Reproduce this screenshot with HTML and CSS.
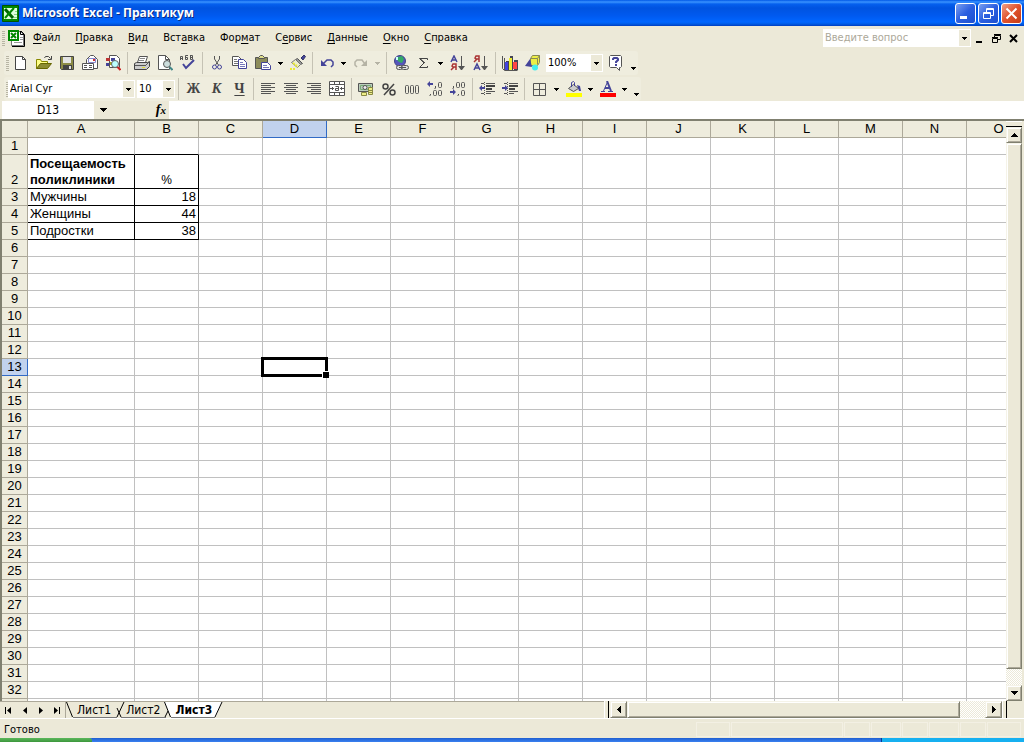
FILE: index.html
```html
<!DOCTYPE html>
<html lang="ru">
<head>
<meta charset="utf-8">
<title>Microsoft Excel - Практикум</title>
<link rel="stylesheet" href="styles.css">
</head>
<body>
<header class="titlebar">
  <svg class="app-icon" width="17" height="17" viewBox="0 0 17 17"><path fill="#080" stroke="#050" d="M.5.5h16v16H.5z"/><path fill="#dfd" d="M2 3h13v11H2z"/><path stroke="#060" stroke-width="3" d="M3 4l8 9"/><path stroke="#080" stroke-width="2" d="M12 3l-9 10"/><path stroke="#8c8" d="M12 12.500h3M12 9.500h3M13 6.500h2"/></svg>
  <h1 class="title">Microsoft Excel - Практикум</h1>
  <div class="window-buttons">
    <button class="win" aria-label="Свернуть"><svg width="19" height="19"><path fill="#fff" d="M4 12h7v3H4z"/></svg></button>
    <button class="win" aria-label="Восстановить"><svg width="19" height="19" fill="none" stroke="#fff"><path d="M4.500 8.500h7v6h-7zM4 9.500h8M7.500 8V4.500h7v7H12M7 5.500h8"/></svg></button>
    <button class="win win-close" aria-label="Закрыть"><svg width="19" height="19"><path stroke="#fff" stroke-width="2" d="M4.500 4.500l10 10M14.500 4.500l-10 10"/></svg></button>
  </div>
</header>

<nav class="menubar">
  <span class="grip"></span>
  <svg class="book-icon" width="18" height="17" viewBox="0 0 18 17"><path fill="#fff" stroke="#777" d="M3.500 1.500h9l3 3v11h-12z"/><path stroke="#000" fill="none" d="M12.500 1v3.500h4v12H4M13 1l3 3"/><path fill="#fff" stroke="#080" stroke-width="2" d="M1 1h9v9H1z"/><path stroke="#080" stroke-width="2" d="M3 3l5 5M8 3L3 8"/><path stroke="#999" d="M6 12.500h8M12 7.500h3M12 9.500h3"/></svg>
  <div class="menus">
    <button><u>Ф</u>айл</button><button><u>П</u>равка</button><button><u>В</u>ид</button><button>Вст<u>а</u>вка</button><button>Фор<u>м</u>ат</button><button>С<u>е</u>рвис</button><button><u>Д</u>анные</button><button><u>О</u>кно</button><button><u>С</u>правка</button>
  </div>
  <div class="combo ask"><input aria-label="Введите вопрос" placeholder="Введите вопрос"><button class="drop" aria-label="Список вопросов"><svg class="tri" width="5" height="3"><path d="M0 0h5L2.500 3z"/></svg></button></div>
  <div class="doc-buttons">
    <button aria-label="Свернуть книгу"><svg width="9" height="9"><path d="M1 7h6v2H1z"/></svg></button>
    <button aria-label="Восстановить книгу"><svg width="9" height="9" fill="none" stroke="#000"><path d="M.5 4.500h5v4h-5zM0 3.500h6M2.500 3V1.500h6v4H6M2 .5h7"/></svg></button>
    <button aria-label="Закрыть книгу"><svg width="9" height="9"><path stroke="#000" stroke-width="2" d="M1 1l7 7M8 1L1 8"/></svg></button>
  </div>
</nav>

<section class="toolbars">
  <div class="toolbar">
    <span class="grip"></span>
    <button aria-label="Создать"><svg viewBox="0 0 16 16"><path fill="#fff" stroke="#444" d="M2.500 1.500h7l3 3v10h-10z"/><path fill="none" stroke="#444" d="M9.500 1.500v3h3"/></svg></button>
    <button aria-label="Открыть"><svg viewBox="0 0 16 16"><path fill="#ff8" stroke="#880" d="M.5 13.500v-9h4l1 2h6v3"/><path fill="#8c8c32" stroke="#660" d="M.5 13.500l4-5h11l-4 5z"/><path fill="none" stroke="#444" d="M8.500 3l1-1.500h3l2 2M15.500 1v3.500H12"/></svg></button>
    <button aria-label="Сохранить"><svg viewBox="0 0 16 16"><path fill="#8c8c46" stroke="#444" d="M1.500 1.500h13v13h-12l-1-1z"/><path fill="#e4e4e4" d="M4 2h8v6H4z"/><path fill="#444" d="M4 10h9v4H4z"/><path fill="#e4e4e4" d="M10 11h2v3h-2z"/></svg></button>
    <button aria-label="Сообщение"><svg viewBox="0 0 16 16"><path fill="#fff" stroke="#555" d="M4.500 9V4.500l4-4h3l4 4v9h-4"/><path fill="#fff" stroke="#88c" d="M6.500 3.500h7v4h-7z"/><path stroke="#c33" stroke-width="2" d="M11 5h2"/><path fill="#fff" stroke="#555" d="M.5 8.500h11v6H.5z"/><path stroke="#555" d="M2 10.500h3M7 10.500h3M2 12.500h3M7 12.500h3"/></svg></button>
    <button aria-label="Поиск"><svg viewBox="0 0 16 16"><path fill="#fff" stroke="#555" d="M4.500.5h7l3 3v9h-10z"/><path fill="#b33" d="M1 3h4v3H1z"/><path fill="#449" d="M6 3h4v3H6zM1 8h3v3H1z"/><path fill="#aa2" d="M5 7h3v3H5z"/><circle cx="10" cy="9" r="3.500" fill="#bff" stroke="#666"/><path stroke="#c22" stroke-width="2" d="M12.500 12l3 3"/></svg></button>
    <i class="sep"></i>
    <button aria-label="Печать"><svg viewBox="0 0 16 16"><path fill="#fff" stroke="#555" d="M3.500 7.500l2-6h8l-2 6z"/><path stroke="#888" d="M6 3.500h5M5 5.500h5"/><path fill="#ccc" stroke="#444" d="M.5 8.500l2-1h11l2-1v5l-3 3H.5z"/><path stroke="#555" d="M1 10.500h11M12 10l3-3"/><path stroke="#dd3" d="M8 12.500h3"/></svg></button>
    <button aria-label="Предварительный просмотр"><svg viewBox="0 0 16 16"><path fill="#fff" stroke="#555" d="M1.500.5h7l4 4v10h-11z"/><path fill="none" stroke="#555" d="M8.500.5v4h4"/><circle cx="10" cy="9" r="3.500" fill="#cdd" stroke="#555"/><path stroke="#488" stroke-width="2" d="M12.500 12l3 3"/></svg></button>
    <button aria-label="Орфография"><svg viewBox="0 0 16 16"><path fill="none" stroke="#555" d="M.5 5V1.500h2V5M0 3.500h3M8 .5H5.500v4h2v-2h-2M10.500 0v4.500h2v-4h-2M10 2.500h3"/><path fill="none" stroke="#449" stroke-width="2" d="M3 9l3 4 8-8"/></svg></button>
    <i class="sep"></i>
    <button aria-label="Вырезать"><svg viewBox="0 0 16 16"><path fill="none" stroke="#555" d="M5.500 1v3l4 6M10.500 1v3l-4 6"/><g fill="none" stroke="#449"><circle cx="5.500" cy="12" r="2"/><circle cx="10.500" cy="12" r="2"/></g></svg></button>
    <button aria-label="Копировать"><svg viewBox="0 0 16 16"><path fill="#fff" stroke="#555" d="M.5 1.500h6l3 3v6h-9z"/><path stroke="#777" d="M2 4.500h3M2 6.500h5M2 8.500h5"/><path fill="#fff" stroke="#449" d="M6.500 4.500h5l3 3v6h-8z"/><path stroke="#77b" d="M8 7.500h3M8 9.500h5M8 11.500h5"/></svg></button>
    <button aria-label="Вставить"><svg viewBox="0 0 16 16"><path fill="#8c8c5a" stroke="#555" d="M.5 2.500h12v11H.5z"/><path fill="#dd8" stroke="#555" d="M3.500 3.500v-1l2-2h2l2 2v1z"/><path fill="#fff" stroke="#449" d="M6.500 7.500h6l3 3v4h-9z"/><path stroke="#77b" d="M8 10.500h4M8 12.500h6"/></svg></button>
    <button class="arrow" aria-label="Варианты вставки"><svg class="tri" width="5" height="3"><path d="M0 0h5L2.500 3z"/></svg></button>
    <button aria-label="Формат по образцу"><svg viewBox="0 0 16 16"><path fill="#449" stroke="#336" d="M11 3l3-3 1.500 1.500L13 5z"/><path fill="#999" stroke="#555" d="M7.500 3.500l5 5-2 1-5-5z"/><path fill="#eec" stroke="#777" d="M5.500 4.500l5 5-3 3-6-5z"/><path stroke="#ee3" stroke-width="2" stroke-dasharray="2 1" d="M0 14h6M3 8l5 4"/></svg></button>
    <i class="sep"></i>
    <button class="narrow" aria-label="Отменить"><svg viewBox="0 0 16 16"><path fill="#449" d="M2 5v6h6z"/><path fill="none" stroke="#449" stroke-width="1.500" d="M4 9l4-4h4l2 2v3l-2 2"/></svg></button>
    <button class="arrow" aria-label="Список отмены"><svg class="tri" width="5" height="3"><path d="M0 0h5L2.500 3z"/></svg></button>
    <button class="narrow" aria-label="Вернуть"><svg viewBox="0 0 16 16"><path fill="#b5b3a5" d="M14 5v6H8z"/><path fill="none" stroke="#b5b3a5" stroke-width="1.500" d="M12 9L9 5H4L2 7v3l2 2"/></svg></button>
    <button class="arrow off" aria-label="Список возврата"><svg class="tri" width="5" height="3"><path d="M0 0h5L2.500 3z"/></svg></button>
    <i class="sep"></i>
    <button aria-label="Гиперссылка"><svg viewBox="0 0 16 16"><circle cx="7" cy="6" r="5.500" fill="#55b" stroke="#448"/><path fill="#3a6" d="M5 2l4-1 2 3-2 4-3-1-2-2z"/><path fill="#cff" d="M3 2h2v3H3z"/><g fill="#ddd" stroke="#555"><rect x="3.500" y="10.500" width="6" height="4" rx="2"/><rect x="8.500" y="10.500" width="7" height="4" rx="2"/></g><path stroke="#555" d="M6 12.500h7"/></svg></button>
    <button class="narrow" aria-label="Автосумма"><svg viewBox="0 0 16 16"><path fill="none" stroke="#444" d="M11.500 5V3.500h-8L8 8l-4.500 4.500h8V11"/><path fill="none" stroke="#444" d="M4 3.500L9 8"/></svg></button>
    <button class="arrow" aria-label="Функции"><svg class="tri" width="5" height="3"><path d="M0 0h5L2.500 3z"/></svg></button>
    <button aria-label="Сортировка по возрастанию"><svg viewBox="0 0 16 16"><path fill="none" stroke="#449" stroke-width="1.500" d="M1 7l3-6 3 6M2 5h4"/><path fill="none" stroke="#a33" stroke-width="1.500" d="M6 15V9H3L2 11l1 1h3M4 12l-3 3"/><path fill="#555" d="M11 1h1v10h3l-3 4h-1l-3-4h3z"/></svg></button>
    <button aria-label="Сортировка по убыванию"><svg viewBox="0 0 16 16"><path fill="none" stroke="#449" stroke-width="1.500" d="M1 15l3-6 3 6M2 13h4"/><path fill="none" stroke="#a33" stroke-width="1.500" d="M6 7V1H3L2 3l1 1h3M4 4L1 7"/><path fill="#555" d="M11 1h1v10h3l-3 4h-1l-3-4h3z"/></svg></button>
    <i class="sep"></i>
    <button aria-label="Мастер диаграмм"><svg viewBox="0 0 16 16"><path fill="none" stroke="#555" d="M.5 1v12.500l2 2h13M2.500 3v12"/><path fill="#445" d="M4 6h3v9H4zM8 1h3v14H8zM12 5h4v10h-4z"/><path fill="#44d" d="M3 7h3v8H3z"/><path fill="#ee3" d="M7 3h3v12H7z"/><path fill="#f44" d="M11 7h4v7h-4z"/></svg></button>
    <button aria-label="Рисование"><svg viewBox="0 0 16 16"><path fill="#ee4" stroke="#885" d="M5.500 3.500l2-3h7v7l-2 3h-7z"/><path fill="none" stroke="#885" d="M5.500 3.500h7v6M12.500 3.500l2-3"/><path fill="#449" d="M0 11l5-7 2 8z"/><circle cx="10" cy="12.500" r="3" fill="#4ee"/></svg></button>
    <div class="combo zoom"><select aria-label="Масштаб"><option>100%</option></select><span class="drop"><svg class="tri" width="5" height="3"><path d="M0 0h5L2.500 3z"/></svg></span></div>
    <button aria-label="Справка"><svg viewBox="0 0 16 16"><path fill="#fff" stroke="#555" d="M1.500 1.500l1-1h10l1 1v10l-1 1h-1v3l-3-3h-6l-1-1z"/><path fill="none" stroke="#449" stroke-width="2" d="M5 5V4l1-1h3l1 1v1L8 7v1M8 9v2"/></svg></button>
    <button class="more" aria-label="Параметры панели"><svg class="tri" width="5" height="3"><path d="M0 0h5L2.500 3z"/></svg></button>
  </div>
  <div class="toolbar">
    <span class="grip"></span>
    <div class="combo font"><select aria-label="Шрифт"><option>Arial Cyr</option></select><span class="drop"><svg class="tri" width="5" height="3"><path d="M0 0h5L2.500 3z"/></svg></span></div>
    <div class="combo size"><select aria-label="Размер"><option>10</option></select><span class="drop"><svg class="tri" width="5" height="3"><path d="M0 0h5L2.500 3z"/></svg></span></div>
    <i class="sep"></i>
    <button class="letter">Ж</button><button class="letter italic">К</button><button class="letter under">Ч</button>
    <i class="sep"></i>
    <button aria-label="По левому краю"><svg viewBox="0 0 16 16"><path stroke="#555" d="M1 2.500h14M1 4.500h10M1 6.500h14M1 8.500h10M1 10.500h14M1 12.500h10"/></svg></button>
    <button aria-label="По центру"><svg viewBox="0 0 16 16"><path stroke="#555" d="M1 2.500h14M3 4.500h10M1 6.500h14M3 8.500h10M1 10.500h14M3 12.500h10"/></svg></button>
    <button aria-label="По правому краю"><svg viewBox="0 0 16 16"><path stroke="#555" d="M1 2.500h14M5 4.500h10M1 6.500h14M5 8.500h10M1 10.500h14M5 12.500h10"/></svg></button>
    <button aria-label="Объединить"><svg viewBox="0 0 16 16"><path fill="#fff" stroke="#555" d="M.5.5h15v14H.5z"/><path fill="none" stroke="#555" d="M0 3.500h16M0 11.500h16M5.500 1v2M10.500 1v2M5.500 12v2M10.500 12v2M1 7.500h4M11 7.500h4M3.500 6v3M12.500 6v3M6.500 5.500h3v4h-3v-2h3"/></svg></button>
    <i class="sep"></i>
    <button aria-label="Денежный формат"><svg viewBox="0 0 16 16"><path fill="#bcb" stroke="#555" d="M.5 2.500h14v8H.5z"/><path fill="none" stroke="#7a7" d="M2.500 4.500h10v4h-10z"/><circle cx="7" cy="6.500" r="2" fill="#eee" stroke="#555"/><path fill="#ee8" stroke="#884" d="M10.500 6.500h4v7h-4zM3.500 11.500h5v3h-5z"/><path stroke="#884" d="M10 9.500h5M10 11.500h5"/></svg></button>
    <button aria-label="Процентный формат"><svg viewBox="0 0 16 16"><g fill="none" stroke="#444" stroke-width="1.500"><circle cx="4.500" cy="5.500" r="2.500"/><circle cx="11.500" cy="11.500" r="2.500"/><path d="M13 3L3 14"/></g></svg></button>
    <button aria-label="Разделитель тысяч"><svg viewBox="0 0 16 16"><g fill="none" stroke="#555"><rect x="1.500" y="4.500" width="3" height="8" rx="1"/><rect x="6.500" y="4.500" width="3" height="8" rx="1"/><rect x="11.500" y="4.500" width="3" height="8" rx="1"/></g></svg></button>
    <button aria-label="Увеличить разрядность"><svg viewBox="0 0 16 16"><path fill="#449" d="M0 3l3-3v2h3v2H3v2z"/><g fill="none" stroke="#555"><path d="M8.500 5v2l-1 1M3.500 13v1l-1 1"/><rect x="11.500" y="1.500" width="3" height="5" rx="1"/><rect x="6.500" y="9.500" width="3" height="5" rx="1"/><rect x="11.500" y="9.500" width="3" height="5" rx="1"/></g></svg></button>
    <button aria-label="Уменьшить разрядность"><svg viewBox="0 0 16 16"><path fill="#449" d="M6 11L3 8v2H0v2h3v2z"/><g fill="none" stroke="#555"><path d="M3.500 5v2l-1 1M8.500 13v1l-1 1"/><rect x="6.500" y="1.500" width="3" height="5" rx="1"/><rect x="11.500" y="1.500" width="3" height="5" rx="1"/><rect x="11.500" y="9.500" width="3" height="5" rx="1"/></g></svg></button>
    <i class="sep"></i>
    <button aria-label="Уменьшить отступ"><svg viewBox="0 0 16 16"><path stroke="#555" d="M2 2.500h3M7 2.500h9M7 10.500h9M2 12.500h3M7 12.500h5"/><path stroke="#444" stroke-width="2" d="M7 5h9M7 8h6"/><path stroke="#555" stroke-dasharray="1 1" d="M5.500 1v14"/><path fill="#449" d="M0 7l3-3v2h3v2H3v2z"/></svg></button>
    <button aria-label="Увеличить отступ"><svg viewBox="0 0 16 16"><path stroke="#555" d="M2 2.500h3M7 2.500h9M7 10.500h9M2 12.500h3M7 12.500h5"/><path stroke="#444" stroke-width="2" d="M7 5h9M7 8h6"/><path stroke="#555" stroke-dasharray="1 1" d="M5.500 1v14"/><path fill="#449" d="M6 7L3 4v2H0v2h3v2z"/></svg></button>
    <i class="sep"></i>
    <button aria-label="Границы"><svg viewBox="0 0 16 16"><path fill="none" stroke="#555" d="M2.500 2.500h12v12h-12zM8.500 2v12M2 8.500h12"/></svg></button>
    <button class="arrow" aria-label="Виды границ"><svg class="tri" width="5" height="3"><path d="M0 0h5L2.500 3z"/></svg></button>
    <button class="narrow" aria-label="Цвет заливки"><svg viewBox="0 0 16 16"><path fill="#ccc" stroke="#555" d="M2.500 7.500l5-4 5 4-5 3z"/><path fill="none" stroke="#449" d="M5.500 6V1.500l2-1 1 1V5"/><path fill="#449" d="M11 4l3 1 1 5h-2z"/><path fill="#ff0" d="M0 12h16v4H0z"/></svg></button>
    <button class="arrow" aria-label="Цвета заливки"><svg class="tri" width="5" height="3"><path d="M0 0h5L2.500 3z"/></svg></button>
    <button class="narrow" aria-label="Цвет шрифта"><svg viewBox="0 0 16 16"><path fill="none" stroke="#449" d="M3.500 10l4-9"/><path fill="none" stroke="#449" stroke-width="2" d="M7 0l4 10M5 7h5"/><path stroke="#449" d="M1 10.500h4M8 10.500h5"/><path fill="red" d="M0 12h16v4H0z"/></svg></button>
    <button class="arrow" aria-label="Цвета шрифта"><svg class="tri" width="5" height="3"><path d="M0 0h5L2.500 3z"/></svg></button>
    <button class="more" aria-label="Параметры панели"><svg class="tri" width="5" height="3"><path d="M0 0h5L2.500 3z"/></svg></button>
  </div>
</section>

<section class="formula-bar">
  <input class="name-box" aria-label="Имя" value="D13">
  <button class="name-drop" aria-label="Список имён"><svg class="tri" width="7" height="4"><path d="M0 0h7L3.500 4z"/></svg></button>
  <button class="fx" aria-label="Вставка функции"><i>f<small>x</small></i></button>
  <input class="formula" aria-label="Строка формул">
</section>

<main class="workbook">
  <div class="sheet"><table class="grid"><colgroup id="cols"></colgroup><thead id="head"></thead><tbody id="rows"></tbody></table></div>
  <div class="vscroll">
    <span class="split-h"></span>
    <button class="scroll-btn" aria-label="Вверх"><svg class="tri" width="7" height="4"><path d="M0 4h7L3.500 0z"/></svg></button>
    <div class="track"><div class="thumb"></div></div>
    <button class="scroll-btn" aria-label="Вниз"><svg class="tri" width="7" height="4"><path d="M0 0h7L3.500 4z"/></svg></button>
  </div>
</main>

<section class="bottom">
  <div class="tabs">
    <button class="nav" aria-label="Первый лист"><svg width="8" height="7"><path d="M0 0h1v7H0zM6 0v7L2 3.500z"/></svg></button>
    <button class="nav" aria-label="Предыдущий лист"><svg width="8" height="7"><path d="M6 0v7L2 3.500z"/></svg></button>
    <button class="nav" aria-label="Следующий лист"><svg width="8" height="7"><path d="M2 0v7l4-3.500z"/></svg></button>
    <button class="nav" aria-label="Последний лист"><svg width="8" height="7"><path d="M1 0v7l4-3.500zM6 0h1v7H6z"/></svg></button>
    <svg class="edge first" width="12" height="16"><path stroke="#000" d="M.5 0l6 15"/><path stroke="#777" d="M7 15.500h5"/></svg>
    <button class="tab">Лист1</button>
    <svg class="edge" width="15" height="16"><path fill="none" stroke="#000" d="M13 0L6 15M6 6l4 9"/><path stroke="#777" d="M0 15.500h6M10 15.500h5"/></svg>
    <button class="tab">Лист2</button>
    <svg class="edge" width="15" height="16"><path fill="#fff" d="M4 0h11v15h-4z"/><path fill="none" stroke="#000" d="M4.500 0l6 15M8 9L5 15"/><path stroke="#777" d="M0 15.500h6M11 15.500h4"/></svg>
    <button class="tab active">Лист3</button>
    <svg class="edge" width="12" height="16"><path fill="#fff" d="M0 0h10L4 15H0z"/><path stroke="#000" d="M10 0L3 15"/><path stroke="#777" d="M0 15.500h3"/></svg>
  </div>
  <div class="hscroll">
    <span class="split-v"></span>
    <button class="scroll-btn" aria-label="Влево"><svg class="tri" width="4" height="7"><path d="M4 0v7L0 3.500z"/></svg></button>
    <div class="track"><div class="thumb"></div></div>
    <button class="scroll-btn" aria-label="Вправо"><svg class="tri" width="4" height="7"><path d="M0 0v7l4-3.500z"/></svg></button>
    <span class="split-v"></span>
    <span class="corner"></span>
  </div>
</section>

<footer class="status">
  <span class="ready">Готово</span>
  <span class="pane w34"></span><span class="pane w112"></span><span class="pane w26"></span><span class="pane w30"></span><span class="pane w26"></span><span class="pane w30"></span><span class="pane w26"></span><span class="pane w34"></span>
</footer>
<div class="taskbar"><span class="start"></span><span class="tasks"></span><span class="tray"></span></div>
<script src="grid.js"></script>
</body>
</html>
```
FILE: styles.css
```css
* { box-sizing: border-box; }
body {
  margin: 0; height: 100vh; display: flex; flex-direction: column; overflow: hidden;
  background: #ece9d8; color: #000;
  font: 11px/14px "DejaVu Sans Condensed", "Noto Sans", sans-serif;
}
button, input, select { font: inherit; color: inherit; margin: 0; padding: 0; border: 0; background: none; border-radius: 0; outline: 0; min-width: 0; }
button { display: flex; align-items: center; justify-content: center; }
svg { display: block; flex: none; }
.tri { fill: #000; shape-rendering: crispEdges; }

.titlebar {
  flex: none; height: 26px; display: flex; align-items: center; gap: 3px; padding: 0 2px;
  background: linear-gradient(#0058e6 0, #3a93ff 2px, #0560ee 4px, #0053e0 8px, #005af0 16px, #0066ff 22px, #005be4 24px, #003dc0 26px);
}
.title { flex: 1; margin: 0; font: bold 12px/18px "Open Sans", "Noto Sans", sans-serif; color: #fff; text-shadow: 1px 1px #0a2a80; white-space: nowrap; }
.window-buttons { display: flex; gap: 2px; }
.win { width: 21px; height: 21px; border: 1px solid #fff; border-radius: 3px; background: linear-gradient(135deg, #7a9ff0, #2c5fe0 50%, #1c50d0); }
.win-close { background: linear-gradient(135deg, #f0a088, #e0522c 50%, #c43c18); }

.grip { flex: none; width: 3px; height: 15px; background: repeating-linear-gradient(#b8b5a4 0 1px, transparent 1px 2px); }
.menubar { flex: none; height: 25px; display: flex; align-items: center; padding: 0 6px 1px 2px; }
.book-icon { margin: 0 7px 0 3px; }
.menus { flex: 1; display: flex; gap: 15px; }
.menus u { text-underline-offset: 2px; }
.combo { position: relative; display: flex; background: #fff; height: 18px; padding: 1px; }
.combo input, .combo select { flex: 1; width: 100%; appearance: none; padding: 0 1px; }
.drop { width: 11px; display: flex; align-items: center; justify-content: center; background: #ece9d8; flex: none; }
.combo select + .drop { position: absolute; top: 1px; right: 1px; bottom: 1px; pointer-events: none; }
.ask { width: 148px; }
.ask input::placeholder { color: #aca899; opacity: 1; }
.doc-buttons { display: flex; gap: 8px; margin-left: 4px; }

.toolbars { flex: none; height: 50px; display: flex; flex-direction: column; align-items: flex-start; gap: 2px; padding-left: 4px; }
.toolbar { height: 24px; display: flex; align-items: center; padding-left: 2px; background: #efedde; border-radius: 3px; }
.toolbar button { width: 23px; height: 22px; flex: none; justify-content: flex-start; padding-left: 3px; }
.toolbar button svg:not(.tri) { width: 16px; height: 16px; }
.toolbar button.narrow { width: 22px; }
.toolbar button.arrow { width: 12px; }
.toolbar button.off .tri { fill: #b5b3a5; }
.toolbar button.more { width: 10px; align-items: flex-end; padding-bottom: 4px; }
.toolbar .grip { margin-right: 1px; }
.sep { flex: none; width: 6px; height: 22px; background: linear-gradient(#c5c2b4, #c5c2b4) 2px 0 / 1px 100% no-repeat; }
.zoom { width: 57px; margin: 0 2px 0 1px; }
.font { width: 127px; margin: 0 2px 0 -2px; }
.size { width: 38px; margin-right: 1px; }
.toolbar button.letter { font: bold 14px/18px "Liberation Serif", serif; color: #444; justify-content: center; padding: 0; }
.toolbar button.italic { font-style: italic; }
.toolbar .under { text-decoration: underline; text-underline-offset: 2px; }

.formula-bar { flex: none; height: 18px; display: flex; padding-left: 2px; }
.name-box { width: 92px; background: #fff; text-align: center; font-size: 12px; }
.name-drop { width: 18px; }
.fx { width: 57px; justify-content: flex-end; padding-right: 3px; font: italic bold 14px/16px "Liberation Serif", serif; }
.fx small { font-size: 11px; }
.formula { flex: 1; background: #fff; }

.workbook { flex: 1; min-height: 0; display: flex; border-top: 2px solid #808070; border-left: 2px solid #808070; }
.sheet { flex: 1; min-width: 0; overflow: hidden; background: #fff; }
.grid { table-layout: fixed; width: 0; border-collapse: separate; border-spacing: 0; font: 13px/16px "Liberation Sans", Arial, sans-serif; }
.c-head { width: 26px; }
.c-wide { width: 107px; }
.c-std { width: 64px; }
.grid th, .grid td { height: 17px; padding: 0; border: solid #c0c0c0; border-width: 0 1px 1px 0; white-space: nowrap; vertical-align: bottom; }
.grid th { background: #eeecdd; border-color: #aca899; font-weight: normal; text-align: center; }
.grid th.current { background: #c1d2ee; border-color: #316ac5; }
.grid td.label { text-align: left; padding-left: 2px; border-color: #000; }
.grid td.title-cell { font-weight: bold; }
.grid td.number { text-align: right; padding-right: 2px; border-color: #000; }
.grid td.unit { text-align: center; border-color: #000; font-size: 12px; }
.grid td.above { border-bottom-color: #000; }
.grid tr.tall > * { height: 34px; }
.grid td.cursor { position: relative; }
.cursor::before { content: ""; position: absolute; inset: -2px; border: 3px solid #000; }
.cursor::after { content: ""; position: absolute; right: -3px; bottom: -3px; width: 6px; height: 6px; background: #000; border: solid #fff; border-width: 1px 0 0 1px; }

.vscroll { width: 18px; flex: none; display: flex; flex-direction: column; padding-right: 2px; }
.track { flex: 1; min-height: 0; min-width: 0; background: repeating-conic-gradient(#ece9d8 0 25%, #fff 0 50%) 0 0 / 2px 2px; }
.thumb, .scroll-btn { background: #ece9d8; border: 1px solid #808070; border-top-color: #f5f3e8; border-left-color: #f5f3e8; box-shadow: inset 1px 1px #fff, inset -1px -1px #aca899; }
.vscroll .thumb { height: 97%; }
.vscroll .scroll-btn { height: 16px; flex: none; }
.split-h { flex: none; height: 6px; border-bottom: 1px solid #000; border-top: 1px solid #fff; background: #ece9d8; }

.bottom { flex: none; height: 17px; display: flex; }
.tabs { flex: 1; display: flex; padding-left: 1px; border-top: 1px solid #aca899; min-width: 0; }
.nav { width: 16px; }
.first { border-left: 1px solid #aca899; }
.tab { height: 16px; border-bottom: 1px solid #777; font-size: 12px; }
.tab.active { background: #fff; font-weight: bold; }
.hscroll { width: 41%; display: flex; }
.hscroll .scroll-btn { width: 17px; flex: none; }
.hscroll .thumb { width: 93%; height: 100%; }
.split-v { flex: none; width: 5px; border-right: 1px solid #000; border-left: 1px solid #fff; margin-right: 1px; }
.corner { width: 16px; flex: none; }

.status { flex: none; height: 20px; display: flex; gap: 1px; padding: 3px 3px 1px 4px; border-top: 1px solid #fff; }
.ready { flex: 1; line-height: 16px; }
.pane { border: 1px solid #f3f0e4; }
.w26 { width: 26px; }
.w30 { width: 30px; }
.w34 { width: 34px; }
.w112 { width: 112px; }
.taskbar { flex: none; height: 4px; display: flex; background: #2a6ee0; }
.start { width: 9%; background: linear-gradient(#5cb85c, #3c963c); border-radius: 0 3px 0 0; }
.tasks { flex: 1; background: linear-gradient(#1f5fd0, #3a80f0); }
.tray { width: 14%; border-left: 1px solid #0a3a90; background: #16b0f0; }
```
FILE: grid.js
```js
const columns = "ABCDEFGHIJKLMNO".split("");
const rowCount = 32;
const cells = {
  A2: ["Посещаемость<br>поликлиники", "label title-cell"], B2: ["%", "unit"],
  A3: ["Мужчины", "label"], B3: ["18", "number"],
  A4: ["Женщины", "label"], B4: ["44", "number"],
  A5: ["Подростки", "label"], B5: ["38", "number"],
  A1: ["", "above"], B1: ["", "above"],
  D13: ["", "cursor"]
};

document.getElementById("cols").innerHTML = '<col class="c-head">' +
  columns.map(c => `<col class="${c === "A" ? "c-wide" : "c-std"}">`).join("");

document.getElementById("head").innerHTML = "<tr><th></th>" +
  columns.map(c => `<th scope="col" class="${c === "D" ? "current" : ""}">${c}</th>`).join("") + "</tr>";

let html = "";
for (let r = 1; r <= rowCount + 1; r++) {
  html += `<tr class="${r === 2 ? "tall" : ""}"><th scope="row" class="${r === 13 ? "current" : ""}">${r <= rowCount ? r : ""}</th>`;
  for (const c of columns) {
    const [text, cls] = cells[c + r] || ["", ""];
    html += `<td class="${cls}">${text}</td>`;
  }
  html += "</tr>";
}
document.getElementById("rows").innerHTML = html;
```
